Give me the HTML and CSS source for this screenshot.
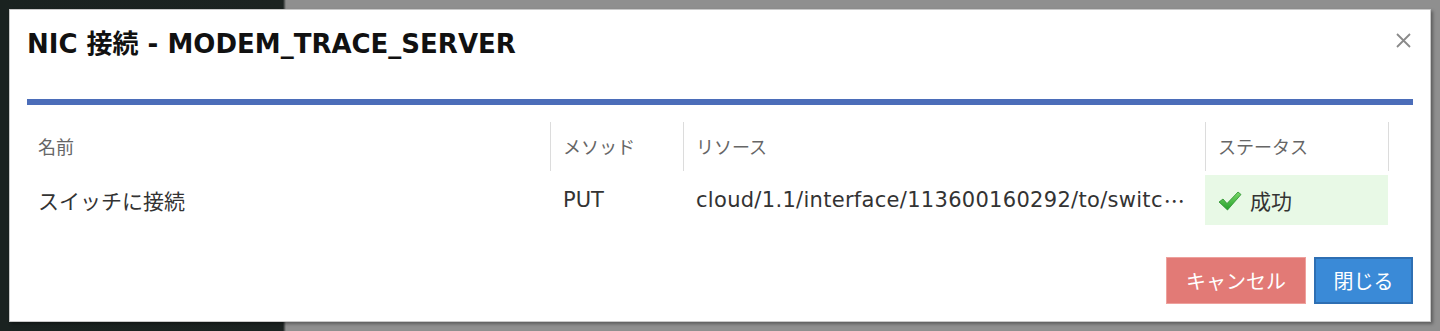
FILE: index.html
```html
<!DOCTYPE html>
<html lang="ja">

<head>
    <meta charset="UTF-8">
    <title>NIC 接続</title>
    <link rel="stylesheet" href="styles.css">
</head>

<body>
    <div class="dialog">
        <div class="dialog-head">
            <h2 class="dialog-title">NIC 接続 - MODEM_TRACE_SERVER</h2>
            <button class="close-btn" title="閉じる">
                <svg width="15" height="15" viewBox="0 0 15 15">
                    <path d="M1 1 L14 14 M14 1 L1 14" stroke="#8a8a8a" stroke-width="1.8" fill="none" />
                </svg>
            </button>
        </div>
        <div class="head-bar"></div>

        <!-- 実行結果の一覧 -->
        <div class="result-table">
            <div class="cell th">名前</div>
            <div class="cell th sep">メソッド</div>
            <div class="cell th sep">リソース</div>
            <div class="cell th sep">ステータス</div>
            <div class="cell th sep"></div>

            <div class="cell td">スイッチに接続</div>
            <div class="cell td">PUT</div>
            <div class="cell td url">cloud/1.1/interface/113600160292/to/switc<span class="dots">…</span></div>
            <div class="cell td ok">
                <svg class="ok-icon" width="24" height="20" viewBox="0 0 24 20">
                    <defs>
                        <linearGradient id="chk" x1="0" y1="0" x2="0" y2="1">
                            <stop offset="0" stop-color="#7bd86a" />
                            <stop offset="1" stop-color="#23a02a" />
                        </linearGradient>
                    </defs>
                    <path d="M1 11 L5 8 L9 12.5 L20 1 L23 3.5 L9.5 19 Z" fill="url(#chk)" stroke="#2a8f2c" stroke-width="0.8" />
                </svg>
                成功
            </div>
            <div class="cell td"></div>
        </div>

        <div class="dialog-foot">
            <button class="btn btn-cancel">キャンセル</button>
            <button class="btn btn-close">閉じる</button>
        </div>
    </div>
</body>

</html>
```

FILE: styles.css
```css
body {
    margin: 0;
    height: 331px;
    overflow: hidden;
    background: linear-gradient(to right, #1a2220 0, #1c2321 283px, #8f8f8f 286px);
    font-family: "DejaVu Sans", "Noto Sans CJK JP", sans-serif;
}

/* ダイアログ本体 */
.dialog {
    position: relative;
    margin: 9px 0 0 9px;
    width: 1420px;
    height: 311px;
    background-color: #fff;
    border: 1px solid #c9c9c9;
    box-shadow: 2px 2px 3px rgba(0, 0, 0, 0.35);
}

.dialog-head {
    display: flex;
    align-items: flex-start;
    justify-content: space-between;
    height: 72px;
    padding: 0 17px 0 17px;
}

.dialog-title {
    margin: 0;
    padding-top: 18px;
    font-size: 26px;
    line-height: 32px;
    font-weight: bold;
    color: #111;
}

.close-btn {
    border: none;
    background: none;
    padding: 0;
    margin-right: 2px;
    margin-top: 23px;
    cursor: pointer;
}

.head-bar {
    height: 6px;
    margin: 17px 17px 0 17px;
    background-color: #4b6db9;
}

/* テーブル */
.result-table {
    display: grid;
    grid-template-columns: 523px 133px 522px 183px 25px;
    grid-template-rows: 49px 50px;
    row-gap: 4px;
    margin: 17px 17px 0 17px;
}

.cell {
    display: flex;
    align-items: center;
    white-space: nowrap;
    overflow: hidden;
    padding-left: 11px;
}

.th {
    font-size: 18px;
    color: #666;
    padding-bottom: 2px;
}

.th.sep {
    border-left: 1px solid #dcdcdc;
    padding-left: 12px;
}

.td {
    font-size: 21px;
    color: #333;
    padding-left: 11px;
}

.td:nth-child(7),
.td:nth-child(8),
.td:nth-child(9) {
    padding-left: 13px;
}

.url {
    letter-spacing: 0.3px;
}

.dots {
    font-family: "Noto Sans CJK JP", sans-serif;
    margin-left: 1px;
}

.ok {
    background-color: #e8f9e6;
}

.ok-icon {
    margin-right: 8px;
    margin-top: 1px;
}

/* ボタン */
.dialog-foot {
    display: flex;
    justify-content: flex-end;
    gap: 8px;
    margin: 32px 17px 0 17px;
}

.btn {
    height: 47px;
    font-family: "DejaVu Sans", "Noto Sans CJK JP", sans-serif;
    font-size: 20px;
    color: #fff;
    cursor: pointer;
}

.btn-cancel {
    width: 140px;
    background-color: #e27a76;
    border: 1px solid #eea19d;
}

.btn-close {
    width: 99px;
    background-color: #3a8ad7;
    border: 2px solid #2e6fb3;
}
```
